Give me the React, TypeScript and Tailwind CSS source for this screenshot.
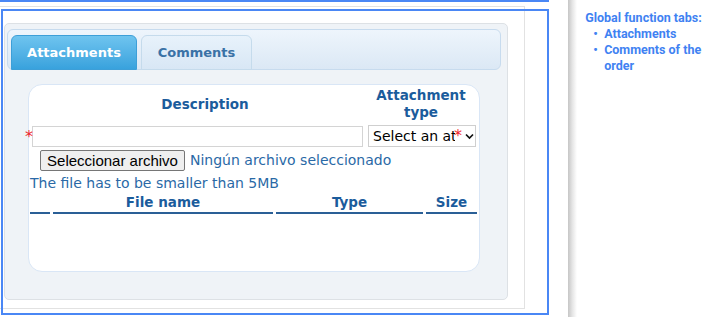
const blue = "text-[#1b5c9c]";

function Tabs() {
  return (
    <div className="flex h-[41px] w-[494px] items-end gap-[4px] rounded-[6px] border border-[#c7dbee] bg-gradient-to-b from-[#eef5fc] to-[#dbe8f5] pl-[3px]">
      <div className="-mb-px flex h-[35px] w-[126px] items-center justify-center rounded-t-[6px] border border-[#3d9fd8] bg-gradient-to-b from-[#6ec4ef] to-[#38a2dd] text-[13px] font-bold text-white">
        Attachments
      </div>
      <div className="-mb-px flex h-[35px] w-[111px] items-center justify-center rounded-t-[6px] border border-[#c5dbec] bg-gradient-to-b from-[#e8f2fb] to-[#d8e7f5] text-[13px] font-bold text-[#3a72a6]">
        Comments
      </div>
    </div>
  );
}

function AttachmentForm() {
  return (
    <div className="mt-[14px] ml-[21px] h-[188px] w-[452px] rounded-[14px] border border-[#d9e6f6] bg-white text-[14px] leading-[17px]">
      <div className={`flex items-center pt-[2px] text-[13.5px] font-bold ${blue}`}>
        <div className="w-[336px] pl-[16px] text-center">Description</div>
        <div className="w-[112px] text-center">
          Attachment
          <br />
          type
        </div>
      </div>

      <div className="relative mt-[4px] flex items-center">
        <span className="absolute -left-[4px] top-[3px] text-[16px] text-[#f0262e]">*</span>
        <div className="ml-[3px] h-[21px] w-[331px] border border-[#d4d4d4]" />
        <div className="ml-[5px] flex h-[22px] w-[108px] items-center border border-[#cfcfcf] pl-[4px] text-black">
          <span className="w-[82px] overflow-hidden whitespace-nowrap">Select an attachment type</span>
          <span className="-ml-[1px] text-[16px] leading-none text-[#f0262e]">*</span>
          <svg className="ml-[3px]" width="9" height="7" viewBox="0 0 9 7">
            <path d="M1 1.5 L4.5 5 L8 1.5" fill="none" stroke="#111" strokeWidth="1.7" />
          </svg>
        </div>
      </div>

      <div className="mt-[3px] flex items-center">
        <button className="ml-[11px] h-[21px] w-[145px] rounded-[2px] border border-[#767676] bg-[#efefef] font-['Liberation_Sans',Arial,sans-serif] text-[15px] leading-none text-black">
          Seleccionar archivo
        </button>
        <span className="ml-[5px] text-[#2a69a6]">Ningún archivo seleccionado</span>
      </div>

      <div className="mt-[4px] pl-[1px] text-[#2a69a6]">The file has to be smaller than 5MB</div>

      <div className={`mt-[2px] ml-px flex gap-[3px] text-[13.5px] font-bold ${blue}`}>
        <div className="h-[20px] w-[20px] border-b-2 border-[#2a5f96]" />
        <div className="h-[20px] w-[220px] border-b-2 border-[#2a5f96] text-center">File name</div>
        <div className="h-[20px] w-[147px] border-b-2 border-[#2a5f96] text-center">Type</div>
        <div className="h-[20px] w-[51px] border-b-2 border-[#2a5f96] text-center">Size</div>
      </div>
    </div>
  );
}

export default function App() {
  return (
    <div className="flex h-[317px] w-[725px] overflow-hidden bg-white font-['DejaVu_Sans',Verdana,sans-serif]">
      <div className="relative w-[568px] shrink-0">
        <div className="mt-[6px] -ml-[12px] h-[303px] w-[537px] border border-[#e2e2e2] pt-[16px] pl-[15px]">
          <div className="h-[277px] w-[504px] rounded-[5px] border border-[#dde1e5] bg-[#eff3f7] pt-[5px] pl-[2px]">
            <Tabs />
            <AttachmentForm />
          </div>
        </div>

        {/* annotation frames */}
        <div className="absolute left-0 top-0 h-[2px] w-[549px] bg-[#4a87f5]" />
        <div className="absolute left-[1px] top-[9px] h-[306px] w-[548px] border-[2.5px] border-[#4a87f5]" />
      </div>

      <div className="flex flex-1">
        <div className="w-[10px] bg-gradient-to-r from-[#c6c6c6] via-[#e6e6e6] to-white" />
        <div className="pt-[10px] pl-[8px] pr-[4px] font-['Roboto',sans-serif] text-[12.5px] font-bold leading-[16px] text-[#3f82f2]">
          <div>Global function tabs:</div>
          <ul>
            <li className="flex">
              <span className="w-[19px] shrink-0 pl-[8px]">•</span>
              <span>Attachments</span>
            </li>
            <li className="flex">
              <span className="w-[19px] shrink-0 pl-[8px]">•</span>
              <span>Comments of the order</span>
            </li>
          </ul>
        </div>
      </div>
    </div>
  );
}
